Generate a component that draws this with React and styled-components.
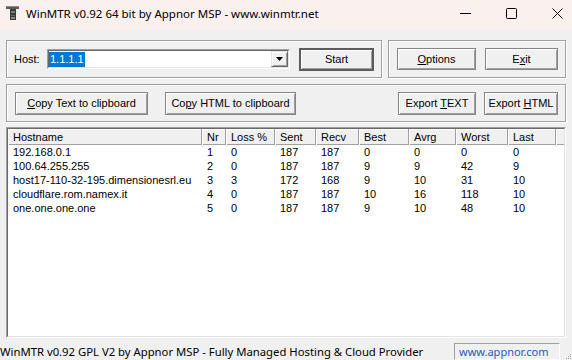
import React from 'react';
import styled, { createGlobalStyle } from 'styled-components';

const Global = createGlobalStyle`
  html, body { margin: 0; padding: 0; width: 572px; height: 360px; overflow: hidden; background: #f0f0f0; }
  #root { width: 572px; height: 360px; }
  * { box-sizing: border-box; }
`;

const Window = styled.div`
  width: 572px;
  height: 360px;
  display: flex;
  flex-direction: column;
  background: #f0f0f0;
  font-family: "Liberation Sans", Arial, sans-serif;
  font-size: 11px;
  color: #000;
  overflow: hidden;
`;

const TitleBar = styled.div`
  flex: none;
  height: 30px;
  background: #faf0ee;
  display: flex;
  align-items: flex-start;
  padding-left: 5px;
`;

const TitleLeft = styled.div`
  height: 26px;
  flex: 1;
  display: flex;
  align-items: center;
  gap: 5px;
`;

const TitleText = styled.span`
  font-family: "Noto Sans", "Open Sans", sans-serif;
  font-size: 11.5px;
  color: #000;
`;

const Caption = styled.div`
  display: flex;
  margin-right: -8px;
`;

const CaptionButton = styled.div`
  width: 46px;
  height: 26px;
  display: flex;
  align-items: center;
  justify-content: center;
`;

const Content = styled.div`
  flex: 1;
  display: flex;
  flex-direction: column;
  padding: 10px 6px 0 6px;
`;

const Row = styled.div`
  display: flex;
  gap: 6px;
  margin-bottom: ${p => p.$mb || 0}px;
`;

const Group = styled.div`
  height: 38px;
  width: ${p => (p.$w ? `${p.$w}px` : 'auto')};
  flex: ${p => (p.$w ? 'none' : '1')};
  border: 1px solid #a0a0a0;
  box-shadow: inset 1px 1px 0 #fff, 1px 1px 0 #fff;
  display: flex;
  align-items: center;
  padding: 0 7px 0 ${p => p.$pl || 7}px;
`;

const Label = styled.span`
  width: 33px;
  flex: none;
`;

const Combo = styled.div`
  width: 243px;
  height: 20px;
  flex: none;
  border: 1px solid;
  border-color: #a0a0a0 #fff #fff #a0a0a0;
`;

const ComboInner = styled.div`
  height: 100%;
  border: 1px solid;
  border-color: #696969 #e3e3e3 #e3e3e3 #696969;
  background: #fff;
  display: flex;
  align-items: center;
  justify-content: space-between;
`;

const Selection = styled.span`
  background: #0078d7;
  color: #fff;
  line-height: 15px;
  padding: 0 1px;
`;

const DropButton = styled.div`
  width: 17px;
  height: 16px;
  background: #f0f0f0;
  border: 1px solid;
  border-color: #e3e3e3 #696969 #696969 #e3e3e3;
  box-shadow: inset 1px 1px 0 #fff, inset -1px -1px 0 #a0a0a0;
  display: flex;
  align-items: center;
  justify-content: center;
`;

const Button = styled.div`
  width: ${p => p.$w}px;
  height: ${p => p.$h || 23}px;
  margin-left: ${p => p.$ml || 0}px;
  flex: none;
  background: #f0f0f0;
  border: ${p => (p.$default ? '2px solid #5c5c5c' : '1px solid #858585')};
  box-shadow: inset 1px 1px 0 #fff, inset -1px -1px 0 #a0a0a0;
  display: flex;
  align-items: center;
  justify-content: center;
  white-space: pre;
`;

const ButtonLabel = styled.span`
  white-space: pre;
`;

const Spacer = styled.div`
  flex: 1;
`;

const ListOuter = styled.div`
  height: 211px;
  border: 1px solid;
  border-color: #a0a0a0 #fff #fff #a0a0a0;
  margin-bottom: 3px;
`;

const ListInner = styled.div`
  height: 100%;
  border: 1px solid;
  border-color: #696969 #e3e3e3 #e3e3e3 #696969;
  background: #fff;
  overflow: hidden;
`;

const COLS = '194px 24px 49px 41px 43px 50px 47px 52px 48px 1fr';

const HeaderRow = styled.div`
  display: grid;
  grid-template-columns: ${COLS};
  height: 16px;
  background: #f0f0f0;
  border-bottom: 1px solid #a0a0a0;
`;

const HeaderCell = styled.div`
  padding-left: 5px;
  line-height: 16px;
  border-right: ${p => (p.$last ? 'none' : '1px solid #a0a0a0')};
  box-shadow: inset 1px 1px 0 #fff;
  white-space: nowrap;
`;

const DataRow = styled.div`
  display: grid;
  grid-template-columns: ${COLS};
  height: 14px;
`;

const Cell = styled.div`
  padding-left: 5px;
  line-height: 14px;
  white-space: nowrap;
`;

const StatusBar = styled.div`
  flex: none;
  height: 19px;
  display: flex;
  align-items: stretch;
  margin: 0 -6px;
`;

const StatusText = styled.div`
  flex: 1;
  font-family: "Noto Sans", "Open Sans", sans-serif;
  font-size: 11.3px;
  line-height: 19px;
  padding-top: 1px;
  white-space: nowrap;
`;

const LinkPanel = styled.div`
  width: 106px;
  margin-top: 2px;
  margin-right: 12px;
  border: 1px solid;
  border-color: #a0a0a0 #fff #fff #a0a0a0;
  padding-left: 4px;
  font-family: "Noto Sans", "Open Sans", sans-serif;
  font-size: 11px;
  line-height: 16px;
  color: #1a5cc8;
  white-space: nowrap;
`;

const Grip = styled.div`
  position: relative;
`;

const GripSvg = styled.svg`
  position: absolute;
  right: 0;
  bottom: 0;
`;

const headers = ['Hostname', 'Nr', 'Loss %', 'Sent', 'Recv', 'Best', 'Avrg', 'Worst', 'Last'];

const rows = [
  ['192.168.0.1', '1', '0', '187', '187', '0', '0', '0', '0'],
  ['100.64.255.255', '2', '0', '187', '187', '9', '9', '42', '9'],
  ['host17-110-32-195.dimensionesrl.eu', '3', '3', '172', '168', '9', '10', '31', '10'],
  ['cloudflare.rom.namex.it', '4', '0', '187', '187', '10', '16', '118', '10'],
  ['one.one.one.one', '5', '0', '187', '187', '9', '10', '48', '10'],
];

function AppIcon() {
  return (
    <svg width="16" height="16" viewBox="0 0 16 16">
      <rect x="1" y="1" width="13" height="3" fill="#5a5a5a" />
      <rect x="1" y="1" width="13" height="1" fill="#8a8a8a" />
      <rect x="5" y="4" width="6" height="11" fill="#3a3a3a" />
      <rect x="6" y="6" width="4" height="2" fill="#7a7a7a" />
      <rect x="6" y="10" width="4" height="1" fill="#6a6a6a" />
      <rect x="6" y="12" width="4" height="2" fill="#8a8a8a" />
    </svg>
  );
}

export default function App() {
  return (
    <>
      <Global />
      <Window>
        <TitleBar>
          <TitleLeft>
            <AppIcon />
            <TitleText>WinMTR v0.92 64 bit by Appnor MSP - www.winmtr.net</TitleText>
          </TitleLeft>
          <Caption>
            <CaptionButton>
              <svg width="11" height="11" viewBox="0 0 11 11">
                <line x1="0" y1="5.5" x2="11" y2="5.5" stroke="#000" strokeWidth="1" />
              </svg>
            </CaptionButton>
            <CaptionButton>
              <svg width="11" height="11" viewBox="0 0 11 11">
                <rect x="0.5" y="0.5" width="10" height="10" rx="1" fill="none" stroke="#000" strokeWidth="1" />
              </svg>
            </CaptionButton>
            <CaptionButton>
              <svg width="11" height="11" viewBox="0 0 11 11">
                <path d="M0.5 0.5 L10.5 10.5 M10.5 0.5 L0.5 10.5" stroke="#000" strokeWidth="1" />
              </svg>
            </CaptionButton>
          </Caption>
        </TitleBar>
        <Content>
          <Row $mb={6}>
            <Group $w={376}>
              <Label>Host:</Label>
              <Combo>
                <ComboInner>
                  <Selection>1.1.1.1</Selection>
                  <DropButton>
                    <svg width="7" height="4" viewBox="0 0 7 4">
                      <path d="M0 0 H7 L3.5 4 Z" fill="#000" />
                    </svg>
                  </DropButton>
                </ComboInner>
              </Combo>
              <Button $w={75} $ml={9} $default>Start</Button>
            </Group>
            <Group $pl={8}>
              <Button $w={79} $h={22}><ButtonLabel><u>O</u>ptions</ButtonLabel></Button>
              <Button $w={73} $h={22} $ml={9}><ButtonLabel>E<u>x</u>it</ButtonLabel></Button>
            </Group>
          </Row>
          <Row $mb={5}>
            <Group $pl={8}>
              <Button $w={133}><ButtonLabel><u>C</u>opy Text to clipboard</ButtonLabel></Button>
              <Button $w={131} $ml={17}><ButtonLabel>Co<u>p</u>y HTML to clipboard</ButtonLabel></Button>
              <Spacer />
              <Button $w={78}><ButtonLabel>{'Export '}<u>T</u>EXT</ButtonLabel></Button>
              <Button $w={74} $ml={8}><ButtonLabel>{'Export '}<u>H</u>TML</ButtonLabel></Button>
            </Group>
          </Row>
          <ListOuter>
            <ListInner>
              <HeaderRow>
                {headers.map(h => (
                  <HeaderCell key={h}>{h}</HeaderCell>
                ))}
                <HeaderCell $last />
              </HeaderRow>
              {rows.map(r => (
                <DataRow key={r[0]}>
                  {r.map((c, i) => (
                    <Cell key={i}>{c}</Cell>
                  ))}
                </DataRow>
              ))}
            </ListInner>
          </ListOuter>
          <StatusBar>
            <StatusText>WinMTR v0.92 GPL V2 by Appnor MSP - Fully Managed Hosting &amp; Cloud Provider</StatusText>
            <LinkPanel>www.appnor.com</LinkPanel>
            <Grip>
              <GripSvg width="8" height="8" viewBox="0 0 8 8">
                <rect x="6" y="2" width="1" height="1" fill="#a0a0a0" />
                <rect x="4" y="4" width="1" height="1" fill="#a0a0a0" />
                <rect x="6" y="4" width="1" height="1" fill="#a0a0a0" />
                <rect x="2" y="6" width="1" height="1" fill="#a0a0a0" />
                <rect x="4" y="6" width="1" height="1" fill="#a0a0a0" />
                <rect x="6" y="6" width="1" height="1" fill="#a0a0a0" />
              </GripSvg>
            </Grip>
          </StatusBar>
        </Content>
      </Window>
    </>
  );
}
